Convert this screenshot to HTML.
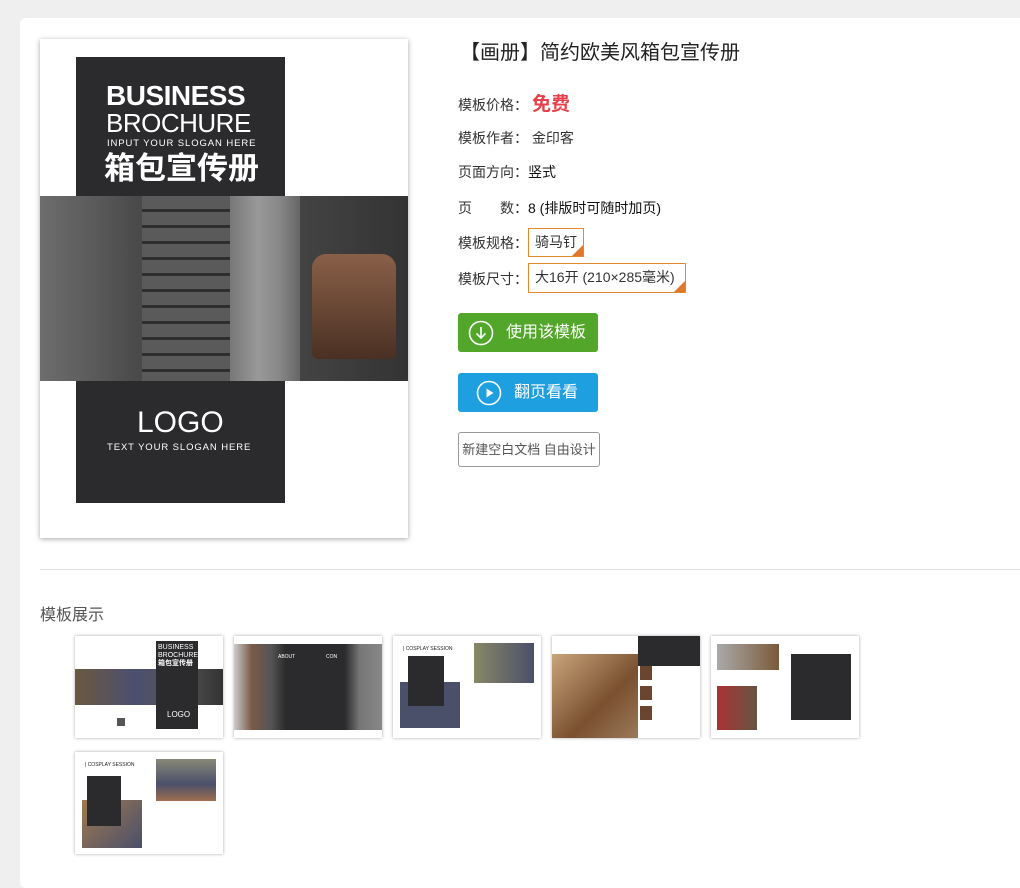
<!DOCTYPE html>
<html><head><meta charset="utf-8"><style>
*{margin:0;padding:0;box-sizing:border-box}
body{width:1020px;height:878px;background:#efefef;font-family:"Liberation Sans","Noto Sans CJK SC",sans-serif;position:relative;overflow:hidden;color:#333}
.panel{position:absolute;left:20px;top:18px;width:1010px;height:870px;background:#fff;border-radius:6px}
.abs{position:absolute}
.cover{left:40px;top:39px;width:368px;height:499px;background:#fff;box-shadow:0 1px 5px rgba(0,0,0,.35)}
.lbl{position:absolute;left:458px;font-size:14px;line-height:18px;color:#333;white-space:nowrap}
.tag{position:absolute;border:1px solid #e08a2c;font-size:14px;padding:0 6px;line-height:27px;color:#333;white-space:nowrap}
.tag:after{content:"";position:absolute;right:0;bottom:0;border-style:solid;border-width:0 0 11px 11px;border-color:transparent transparent #e0772c transparent}
.btn{position:absolute;left:458px;width:140px;height:39px;border-radius:3px;color:#fff;font-size:16px}
.th{position:absolute;width:148px;height:102px;background:#fff;box-shadow:0 0 3px rgba(0,0,0,.35)}
</style></head><body>
<div class="panel"></div>
<div class="abs cover">
  <div class="abs" style="left:36px;top:18px;width:209px;height:446px;background:#2b2a2c"></div>
  <div class="abs" style="left:0;top:157px;width:368px;height:185px;background:linear-gradient(90deg,#6d6d6d 0%,#5a5a5a 15%,#4a4a4a 26%,#4b4b4b 50%,#7a7a7a 55%,#8a8a8a 63%,#444 70%,#333 100%)"></div>
  <div class="abs" style="left:102px;top:157px;width:88px;height:185px;background:repeating-linear-gradient(180deg,#5a5a5a 0 13px,#2e2e2e 13px 16px)"></div>
  <div class="abs" style="left:190px;top:157px;width:70px;height:185px;background:linear-gradient(90deg,#777,#999 40%,#888 70%,#666)"></div>
  <div class="abs" style="left:272px;top:215px;width:84px;height:105px;background:linear-gradient(180deg,#8a6048,#4a3023);border-radius:14px 14px 6px 6px"></div>
  <div class="abs" style="left:66px;top:42px;color:#fff;font-size:28px;font-weight:bold;line-height:30px;letter-spacing:-0.5px">BUSINESS</div>
  <div class="abs" style="left:66px;top:70px;color:#fff;font-size:26px;line-height:28px;letter-spacing:-0.5px">BROCHURE</div>
  <div class="abs" style="left:67px;top:99px;color:#fff;font-size:9.5px;letter-spacing:0.9px">INPUT YOUR SLOGAN HERE</div>
  <div class="abs" style="left:64px;top:110px;color:#fff;font-size:31px;line-height:40px;font-weight:bold">箱包宣传册</div>
  <div class="abs" style="left:97px;top:368px;color:#fff;font-size:30px;line-height:32px">LOGO</div>
  <div class="abs" style="left:67px;top:403px;color:#fff;font-size:9.5px;letter-spacing:0.9px">TEXT YOUR SLOGAN HERE</div>
</div>

<div class="abs" style="left:460px;top:41px;font-size:20px;line-height:24px;color:#222">【画册】简约欧美风箱包宣传册</div>
<div class="lbl" style="top:96px">模板价格：<span style="color:#e8404a;font-size:19px;font-weight:bold;margin-left:4px">免费</span></div>
<div class="lbl" style="top:129px">模板作者： 金印客</div>
<div class="lbl" style="top:163px">页面方向：<span style="color:#111">竖式</span></div>
<div class="lbl" style="top:199px">页　　数：<span style="color:#111">8 (排版时可随时加页)</span></div>
<div class="lbl" style="top:234px">模板规格：</div>
<div class="tag" style="left:528px;top:228px;height:29px">骑马钉</div>
<div class="lbl" style="top:270px">模板尺寸：</div>
<div class="tag" style="left:528px;top:263px;height:30px;width:158px">大16开 (210×285毫米)</div>

<div class="btn" style="top:313px;background:#52a62a">
  <svg class="abs" style="left:10px;top:7px" width="26" height="26" viewBox="0 0 26 26"><circle cx="13" cy="13" r="11.5" fill="none" stroke="#fff" stroke-width="1.6"/><path d="M13 7v11M8.5 13.5L13 18l4.5-4.5" fill="none" stroke="#fff" stroke-width="1.6"/></svg>
  <span class="abs" style="left:48px;top:9px;line-height:22px">使用该模板</span></div>
<div class="btn" style="top:373px;background:#1d9fe0">
  <svg class="abs" style="left:18px;top:7px" width="26" height="26" viewBox="0 0 26 26"><circle cx="13" cy="13" r="11.5" fill="none" stroke="#fff" stroke-width="1.6"/><path d="M10.5 8.5v9l7-4.5z" fill="#fff"/></svg>
  <span class="abs" style="left:56px;top:9px;line-height:22px">翻页看看</span></div>
<div class="abs" style="left:458px;top:432px;width:142px;height:35px;border:1px solid #999;border-radius:3px;font-size:13px;color:#555;line-height:33px;text-align:center">新建空白文档 自由设计</div>

<div class="abs" style="left:40px;top:569px;width:980px;height:1px;background:#e2e2e2"></div>
<div class="abs" style="left:40px;top:601px;font-size:16px;color:#555">模板展示</div>

<div class="th" style="left:75px;top:636px">
  <div class="abs" style="left:0;top:33px;width:148px;height:36px;background:linear-gradient(90deg,#6b5840,#4b4f70 40%,#555 70%,#333)"></div>
  <div class="abs" style="left:81px;top:5px;width:42px;height:88px;background:#2b2a2c"></div>
  <div class="abs" style="left:83px;top:8px;color:#fff;font-size:7px;line-height:8px">BUSINESS<br>BROCHURE<br><b>箱包宣传册</b></div>
  <div class="abs" style="left:92px;top:74px;color:#fff;font-size:8px">LOGO</div>
  <div class="abs" style="left:42px;top:82px;width:8px;height:8px;background:#555"></div>
</div>
<div class="th" style="left:234px;top:636px">
  <div class="abs" style="left:0;top:8px;width:148px;height:86px;background:linear-gradient(90deg,#ccc,#7a5a48 12%,#555 25%,#2b2a2c 35%,#2b2a2c 75%,#777 85%,#888)"></div>
  <div class="abs" style="left:44px;top:18px;color:#fff;font-size:5px">ABOUT</div>
  <div class="abs" style="left:92px;top:18px;color:#fff;font-size:5px">CON</div>
</div>
<div class="th" style="left:393px;top:636px">
  <div class="abs" style="left:7px;top:46px;width:60px;height:46px;background:#4a4f6a"></div>
  <div class="abs" style="left:15px;top:20px;width:36px;height:50px;background:#2b2a2c"></div>
  <div class="abs" style="left:81px;top:7px;width:60px;height:40px;background:linear-gradient(90deg,#886,#4a4f6a)"></div>
  <div class="abs" style="left:10px;top:10px;font-size:5px;color:#222">| COSPLAY SESSION</div>
</div>
<div class="th" style="left:552px;top:636px">
  <div class="abs" style="left:0;top:18px;width:86px;height:84px;background:linear-gradient(135deg,#c9a57a,#7a5030 60%,#9a7a5a)"></div>
  <div class="abs" style="left:86px;top:0;width:62px;height:30px;background:#2b2a2c"></div>
  <div class="abs" style="left:88px;top:30px;width:12px;height:60px;background:repeating-linear-gradient(180deg,#6a4530 0 14px,#fff 14px 20px)"></div>
</div>
<div class="th" style="left:711px;top:636px">
  <div class="abs" style="left:6px;top:8px;width:62px;height:26px;background:linear-gradient(90deg,#aaa,#7a5a3a)"></div>
  <div class="abs" style="left:80px;top:18px;width:60px;height:66px;background:#2b2a2c"></div>
  <div class="abs" style="left:6px;top:50px;width:40px;height:44px;background:linear-gradient(90deg,#a33,#654)"></div>
</div>
<div class="th" style="left:75px;top:752px">
  <div class="abs" style="left:7px;top:48px;width:60px;height:48px;background:linear-gradient(135deg,#a07a50,#4a4f6a)"></div>
  <div class="abs" style="left:12px;top:24px;width:34px;height:50px;background:#2b2a2c"></div>
  <div class="abs" style="left:81px;top:7px;width:60px;height:42px;background:linear-gradient(180deg,#887,#4a4f6a 60%,#a07050)"></div>
  <div class="abs" style="left:10px;top:10px;font-size:5px;color:#222">| COSPLAY SESSION</div>
</div>
</body></html>
